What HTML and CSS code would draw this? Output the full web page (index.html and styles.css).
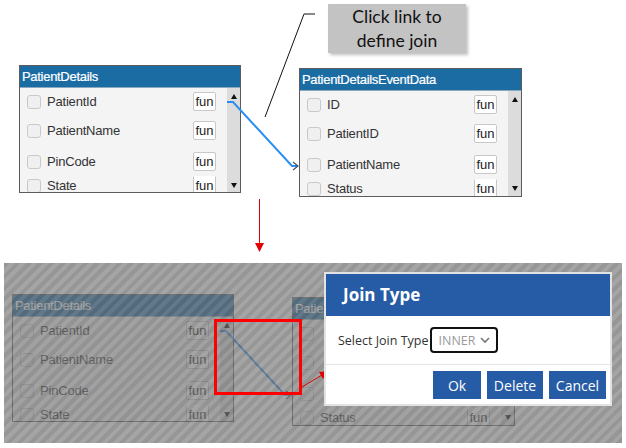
FILE: index.html
```html
<!DOCTYPE html>
<html lang="en">
<head>
    <meta charset="UTF-8">
    <title>Define Join</title>
    <link rel="stylesheet" href="styles.css">
</head>
<body>
    <section class="stage stage-top">
        <svg class="callout-line" width="626" height="130" viewBox="0 0 626 130">
            <polyline points="315,14 304,14 265,117" fill="none" stroke="#111" stroke-width="1"/>
        </svg>
        <div class="callout">Click link to<br>define join</div>

        <div class="diagram diagram-top">
            <div class="table table-left">
                <div class="table-head">PatientDetails</div>
                <div class="table-body">
                    <div class="rows">
                        <div class="row"><span class="check"></span><span class="name">PatientId</span><span class="fun">fun</span></div>
                        <div class="row"><span class="check"></span><span class="name">PatientName</span><span class="fun">fun</span></div>
                        <div class="row"><span class="check"></span><span class="name">PinCode</span><span class="fun">fun</span></div>
                        <div class="row cut"><span class="check"></span><span class="name">State</span><span class="fun">fun</span></div>
                    </div>
                    <div class="scrollbar"><span class="up"></span><span class="down"></span></div>
                </div>
            </div>
            <div class="table table-right">
                <div class="table-head">PatientDetailsEventData</div>
                <div class="table-body">
                    <div class="rows">
                        <div class="row"><span class="check"></span><span class="name">ID</span><span class="fun">fun</span></div>
                        <div class="row"><span class="check"></span><span class="name">PatientID</span><span class="fun">fun</span></div>
                        <div class="row"><span class="check"></span><span class="name">PatientName</span><span class="fun">fun</span></div>
                        <div class="row cut"><span class="check"></span><span class="name">Status</span><span class="fun">fun</span></div>
                    </div>
                    <div class="scrollbar"><span class="up"></span><span class="down"></span></div>
                </div>
            </div>
            <svg class="link" width="300" height="132" viewBox="0 0 300 132">
                <polyline points="208,37 214,37 273,101 279,101" fill="none" stroke="#2b8ef2" stroke-width="2"/>
                <polyline points="274,97 279,101 274,105" fill="none" stroke="#44536a" stroke-width="1.2"/>
            </svg>
        </div>
    </section>

    <svg class="down-arrow" width="626" height="64" viewBox="0 0 626 64">
        <line x1="259.5" y1="0" x2="259.5" y2="46" stroke="#e00000" stroke-width="1"/>
        <polygon points="255,44 264,44 259.5,53" fill="#e00000"/>
    </svg>

    <section class="stage stage-bottom">
        <div class="diagram diagram-bottom">
            <div class="table table-left">
                <div class="table-head">PatientDetails</div>
                <div class="table-body">
                    <div class="rows">
                        <div class="row"><span class="check"></span><span class="name">PatientId</span><span class="fun">fun</span></div>
                        <div class="row"><span class="check"></span><span class="name">PatientName</span><span class="fun">fun</span></div>
                        <div class="row"><span class="check"></span><span class="name">PinCode</span><span class="fun">fun</span></div>
                        <div class="row cut"><span class="check"></span><span class="name">State</span><span class="fun">fun</span></div>
                    </div>
                    <div class="scrollbar"><span class="up"></span><span class="down"></span></div>
                </div>
            </div>
            <div class="table table-right">
                <div class="table-head"><span class="head-clip">Patie</span></div>
                <div class="table-body">
                    <div class="rows">
                        <div class="row"><span class="check"></span></div>
                        <div class="row"><span class="check"></span></div>
                        <div class="row"><span class="check"></span></div>
                        <div class="row cut"><span class="check"></span><span class="name">Status</span><span class="fun">fun</span></div>
                    </div>
                    <div class="scrollbar"><span class="up"></span><span class="down"></span></div>
                </div>
            </div>
            <svg class="link" width="300" height="132" viewBox="0 0 300 132">
                <polyline points="208,37 214,37 273,101 279,101" fill="none" stroke="#2b8ef2" stroke-width="2"/>
                <polyline points="274,97 279,101 274,105" fill="none" stroke="#44536a" stroke-width="1.2"/>
            </svg>
        </div>

        <div class="dim"></div>
        <div class="focus-box"></div>
        <svg class="pointer" width="618" height="180" viewBox="0 0 618 180">
            <line x1="298" y1="124" x2="318" y2="112" stroke="#e00000" stroke-width="1"/>
            <polygon points="324,108 315,109 319,116" fill="#e00000"/>
        </svg>

        <div class="dialog">
            <div class="dialog-head">Join Type</div>
            <div class="dialog-body">
                <span class="label">Select Join Type</span>
                <div class="select">
                    <span>INNER</span>
                    <svg width="10" height="7" viewBox="0 0 10 7"><polyline points="1,1 5,5 9,1" fill="none" stroke="#777" stroke-width="1.6"/></svg>
                </div>
            </div>
            <div class="dialog-foot">
                <button class="btn btn-ok">Ok</button>
                <button class="btn btn-delete">Delete</button>
                <button class="btn btn-cancel">Cancel</button>
            </div>
        </div>
    </section>
</body>
</html>
```

FILE: styles.css
```css
body {
    margin: 0;
    width: 626px;
    height: 448px;
    overflow: hidden;
    background: #fff;
    font-family: "Liberation Sans", Arial, sans-serif;
}

.stage {
    position: relative;
}

.stage-top {
    height: 199px;
}

.callout-line {
    position: absolute;
    left: 0;
    top: 0;
}

.callout {
    position: absolute;
    left: 328px;
    top: 4px;
    width: 138px;
    height: 49px;
    background: #c3c3c3;
    box-shadow: 2px 2px 3px rgba(0, 0, 0, 0.25);
    font-family: Lato, "Open Sans", sans-serif;
    font-size: 17.5px;
    line-height: 24px;
    color: #111;
    text-align: center;
    padding-top: 1px;
    box-sizing: border-box;
}

/* diagram: two tables joined by a link */
.diagram {
    position: absolute;
    width: 503px;
    height: 132px;
}

.diagram-top {
    left: 19px;
    top: 65px;
}

.diagram-bottom {
    left: 8px;
    top: 31px;
}

.table {
    position: absolute;
    width: 222px;
    height: 128px;
    border: 1px solid #5c5c5c;
    box-sizing: border-box;
    background: #f4f4f4;
    overflow: hidden;
}

.table-left {
    left: 0;
    top: 0;
}

.table-right {
    left: 280px;
    top: 3px;
    width: 223px;
    height: 129px;
}

.table-head {
    height: 21px;
    line-height: 21px;
    background: #1c6ca4;
    color: #fff;
    font-size: 13px;
    letter-spacing: -0.3px;
    padding-left: 2px;
    border-bottom: 1px solid #8aa9c0;
    -webkit-text-stroke: 0.2px #fff;
}

.head-clip {
    display: inline-block;
    width: 30px;
    overflow: hidden;
    white-space: nowrap;
}

.table-body {
    display: flex;
    height: 105px;
}

.rows {
    flex: 1;
    overflow: hidden;
}

.row {
    display: flex;
    align-items: center;
    height: 31px;
    padding-left: 7px;
    font-size: 13px;
    color: #333;
}

.row:first-child {
    height: 27px;
}

.row.cut {
    height: 17px;
}

.check {
    width: 12px;
    height: 12px;
    border: 1px solid #c9c9c9;
    border-radius: 3px;
    background: #f0f0f0;
}

.name {
    flex: 1;
    margin-left: 6px;
    letter-spacing: -0.2px;
}

.fun {
    width: 21px;
    height: 17px;
    line-height: 17px;
    border: 1px solid #c8c8c8;
    border-radius: 2px;
    background: #fff;
    text-align: center;
    margin-right: 11px;
    color: #222;
}

.row.cut .fun {
    border-top-color: transparent;
    border-radius: 0;
}

.scrollbar {
    width: 13px;
    background: #dcdcdc;
    display: flex;
    flex-direction: column;
    justify-content: space-between;
    align-items: center;
    padding: 6px 0 5px;
    box-sizing: border-box;
}

.up {
    border-left: 3px solid transparent;
    border-right: 3px solid transparent;
    border-bottom: 5px solid #111;
}

.down {
    border-left: 3px solid transparent;
    border-right: 3px solid transparent;
    border-top: 5px solid #111;
}

.link {
    position: absolute;
    left: 0;
    top: 0;
}

.down-arrow {
    display: block;
}

/* dimmed modal view */
.stage-bottom {
    margin-left: 4px;
    width: 618px;
    height: 180px;
    overflow: hidden;
    background: #fff;
}

.dim {
    position: absolute;
    inset: 0;
    background: repeating-linear-gradient(135deg,
        rgba(106, 106, 106, 0.7) 0 4px,
        rgba(126, 126, 126, 0.7) 4px 8px);
}

.focus-box {
    position: absolute;
    left: 210px;
    top: 56px;
    width: 88px;
    height: 76px;
    border: 3px solid #f00;
    box-sizing: border-box;
}

.pointer {
    position: absolute;
    left: 0;
    top: 0;
}

.dialog {
    position: absolute;
    left: 320px;
    top: 9px;
    width: 288px;
    height: 134px;
    background: #fff;
    border: 2px solid #e2e2e2;
    box-sizing: border-box;
    font-family: "Open Sans", sans-serif;
}

.dialog-head {
    height: 42px;
    line-height: 42px;
    background: #265ca6;
    color: #fff;
    font-weight: bold;
    font-size: 17px;
    padding-left: 17px;
}

.dialog-body {
    display: flex;
    align-items: center;
    height: 48px;
    padding-left: 12px;
    border-bottom: 1px solid #e6e6e6;
}

.label {
    font-size: 12.5px;
    color: #333;
}

.select {
    display: flex;
    align-items: center;
    justify-content: space-between;
    width: 68px;
    height: 26px;
    margin-left: 1px;
    padding: 0 6px 0 7px;
    border: 2px solid #111;
    border-radius: 4px;
    box-sizing: border-box;
    font-size: 12.5px;
    color: #9a9a9a;
}

.dialog-foot {
    display: flex;
    justify-content: flex-end;
    gap: 6px;
    padding: 6px 4px 0 0;
}

.btn {
    height: 28px;
    border: none;
    background: #265ca6;
    color: #fff;
    font-family: "Open Sans", sans-serif;
    font-size: 14px;
    padding: 0;
}

.btn-ok {
    width: 48px;
}

.btn-delete {
    width: 56px;
}

.btn-cancel {
    width: 57px;
}
```
